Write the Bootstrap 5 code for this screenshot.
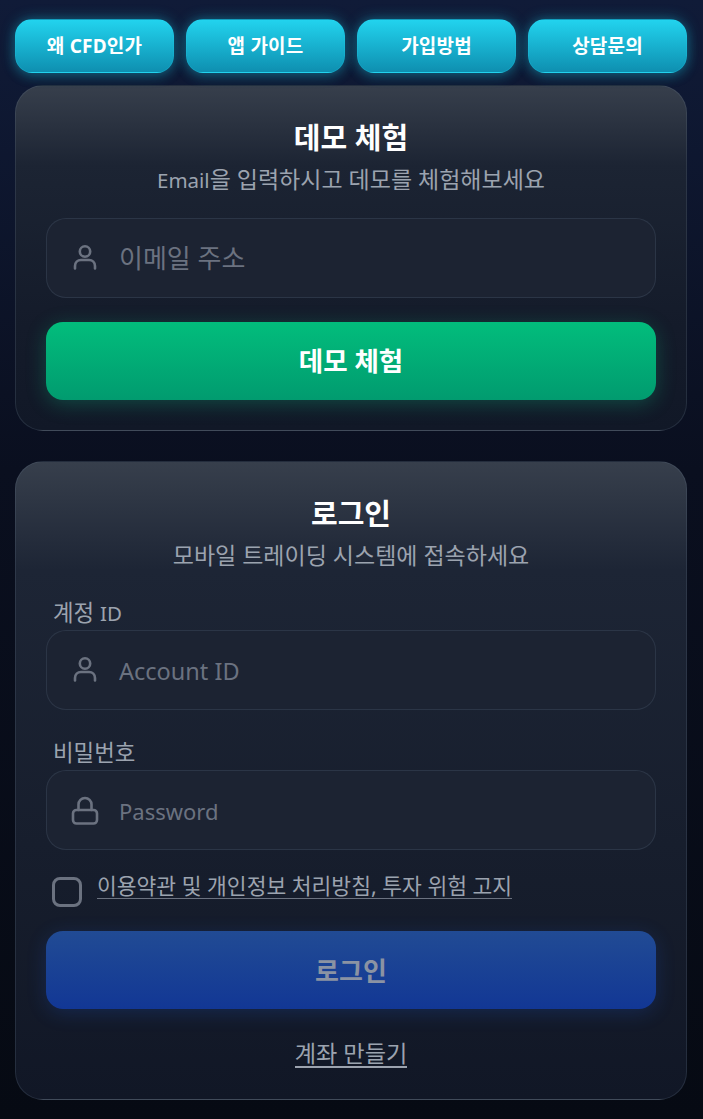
<!doctype html>
<html lang="ko">
<head>
<meta charset="utf-8">
<meta name="viewport" content="width=device-width, initial-scale=1">
<link href="https://cdn.jsdelivr.net/npm/bootstrap@5.3.0/dist/css/bootstrap.min.css" rel="stylesheet">
<style>
html,body{height:100%}
body{font-family:"Noto Sans","Noto Sans CJK KR",sans-serif;background:linear-gradient(180deg,#101b38 0%,#0a0f1f 42%,#060a13 100%);color:#fff;overflow:hidden}
.shell{width:703px;height:1119px;padding:19px 16px 0 15px}
.topbar{display:grid;grid-template-columns:repeat(4,159px);gap:12px;margin-bottom:12px}
.topbtn{height:54px;border-radius:17px;border:1px solid rgba(34,211,238,.2);background:linear-gradient(180deg,#22d3ee 0%,#0e8fb0 100%);color:#fff;font-weight:700;font-size:19px;letter-spacing:.2px;padding:0;box-shadow:0 0 14px rgba(34,211,238,.36),0 4px 12px rgba(8,145,178,.22)}
.panel{border:1px solid rgba(100,116,139,.24);border-radius:28px;background:linear-gradient(180deg,#373f4c 0%,#1c2433 23%,#141b2a 70%,#111827 100%);padding:30px}
.panel-b{background:linear-gradient(180deg,#373f4c 0%,#1d2535 17%,#171e2d 60%,#111726 100%)}
.panel-login{margin-top:30px;height:639px}
.panel-title{font-size:29px;line-height:44px;font-weight:700;margin:0;text-align:center;height:44px}
.panel-sub{font-size:23px;line-height:30px;height:30px;color:#9ca3af;text-align:center;margin:4px 0 0;white-space:nowrap}
.run-latin{font-size:20.5px}
.fieldbox{height:80px;border-radius:20px;border:1px solid rgba(71,85,105,.36);background:#1c2332;display:flex;align-items:center;padding-left:22px;gap:18px;color:#6b7280;font-size:26px}
.fieldbox svg{flex:none;width:32px;height:32px}
.fieldbox input{background:transparent;border:0;outline:0;flex:1;min-width:0;color:#fff;font:inherit;padding:0}
.fieldbox input::placeholder{color:#6b7280;opacity:1}
.field-acct input{font-size:23.5px;padding-top:4px}
.field-pass input{font-size:22px;padding-top:2px}
.bigbtn{display:block;width:100%;height:78px;border-radius:17px;border:0;font-weight:700}
.btn-demo{font-size:26.5px;color:#fff;background:linear-gradient(180deg,#02bd7c 0%,#019b6f 100%);box-shadow:0 4px 20px rgba(16,185,129,.3);padding:2px 0 0}
.btn-login{font-size:26px;color:#8b93a3;background:linear-gradient(180deg,#214b94 0%,#123795 100%);box-shadow:0 4px 20px rgba(37,99,235,.2);margin-top:24px;padding:2px 0 0}
.fieldlabel{display:block;font-size:22.4px;line-height:30px;height:32px;color:#9ca3af;padding-left:7px;margin:0;white-space:nowrap}
.label-first{margin-top:28px}
.label-second{margin-top:28px}
.agree{display:flex;align-items:flex-start;gap:15px;padding-left:6px;margin-top:27px}
.chk{width:30px;height:30px;flex:none;border:3px solid #6b7280;border-radius:8px;background:transparent;appearance:none}
.agree a{color:#9ca3af;font-size:21.5px;line-height:26px;height:26px;display:block;text-decoration:none;border-bottom:1px solid #6b7280;margin-top:-4px;padding:0;white-space:nowrap}
.signup-row{margin-top:31px}
.signup{display:inline-block;color:#9ca3af;font-size:23.2px;line-height:26px;text-decoration:none;border-bottom:2px solid #9ca3af;white-space:nowrap}
</style>
</head>
<body>
<div class="shell">
  <div class="topbar">
    <button class="btn topbtn" type="button">왜 CFD인가</button>
    <button class="btn topbtn" type="button">앱 가이드</button>
    <button class="btn topbtn" type="button">가입방법</button>
    <button class="btn topbtn" type="button">상담문의</button>
  </div>

  <section class="panel">
    <h2 class="panel-title">데모 체험</h2>
    <p class="panel-sub"><span class="run-latin">Email</span>을 입력하시고 데모를 체험해보세요</p>
    <div class="fieldbox mt-4">
      <svg viewBox="0 0 32 32" fill="none" stroke="#6b7280" stroke-width="2.6" stroke-linecap="round"><circle cx="16" cy="9.5" r="5.2"/><path d="M6 26.5v-2.5c0-3.6 2.6-6 6-6h8c3.4 0 6 2.4 6 6v2.5"/></svg>
      <input type="text" placeholder="이메일 주소" aria-label="이메일 주소">
    </div>
    <button class="bigbtn btn-demo mt-4" type="button">데모 체험</button>
  </section>

  <section class="panel panel-b panel-login">
    <h2 class="panel-title">로그인</h2>
    <p class="panel-sub">모바일 트레이딩 시스템에 접속하세요</p>
    <label class="fieldlabel label-first">계정 <span class="run-latin">ID</span></label>
    <div class="fieldbox field-acct">
      <svg viewBox="0 0 32 32" fill="none" stroke="#6b7280" stroke-width="2.6" stroke-linecap="round"><circle cx="16" cy="9.5" r="5.2"/><path d="M6 26.5v-2.5c0-3.6 2.6-6 6-6h8c3.4 0 6 2.4 6 6v2.5"/></svg>
      <input type="text" placeholder="Account ID" aria-label="Account ID">
    </div>
    <label class="fieldlabel label-second">비밀번호</label>
    <div class="fieldbox field-pass">
      <svg viewBox="0 0 32 32" fill="none" stroke="#6b7280" stroke-width="2.6" stroke-linecap="round" stroke-linejoin="round"><rect x="4" y="16" width="24" height="13.5" rx="3.5"/><path d="M9.5 16v-5.5a6.5 6.5 0 0 1 13 0V16"/></svg>
      <input type="password" placeholder="Password" aria-label="Password">
    </div>
    <div class="agree">
      <input class="chk" type="checkbox" aria-label="동의">
      <a href="#">이용약관 및 개인정보 처리방침, 투자 위험 고지</a>
    </div>
    <button class="bigbtn btn-login" type="button">로그인</button>
    <div class="text-center signup-row"><a class="signup" href="#">계좌 만들기</a></div>
  </section>
</div>
<script src="https://cdn.jsdelivr.net/npm/bootstrap@5.3.0/dist/js/bootstrap.bundle.min.js"></script>
</body>
</html>
